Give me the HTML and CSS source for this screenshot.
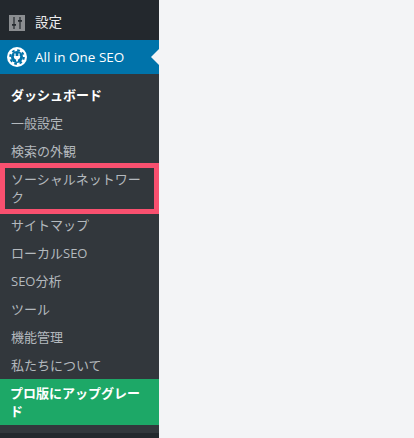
FILE: index.html
```html
<!DOCTYPE html>
<html lang="ja">
<head>
<meta charset="utf-8">
<title>All in One SEO</title>
<link rel="stylesheet" href="styles.css">
</head>
<body>
<nav class="sidebar">
  <a class="top-item">
    <svg class="settings-icon" viewBox="0 0 16 16" width="16" height="16"><rect width="16" height="16" fill="#8b8e91"/><path d="M5 2v12M11 2v12" stroke="#23282d" stroke-width="1.200" fill="none"/><path d="M3 9h4v1.700h-4zM9 5h4v1.700h-4z" fill="#23282d"/></svg>
    <span>設定</span>
  </a>
  <a class="top-item current">
    <svg class="aio-icon" viewBox="0 0 20 20" width="20" height="20"><circle cx="10" cy="10" r="10" fill="#fff"/><circle cx="10" cy="10" r="6" fill="#0073aa"/><circle cx="10" cy="10" r="6.800" fill="none" stroke="#0073aa" stroke-width="2" stroke-dasharray="2.670 2.670"/><path d="M8 6.500v2.500M12 6.500v2.500" stroke="#fff" stroke-width="1.300" fill="none"/><path d="M6.800 9h6.400c0 2.100-1 3.300-2.300 3.600v2h-1.800v-2c-1.300-.3-2.300-1.500-2.300-3.600z" fill="#fff"/></svg>
    <span>All in One SEO</span>
  </a>
  <ul class="submenu">
    <li class="sub-item active">ダッシュボード</li>
    <li class="sub-item">一般設定</li>
    <li class="sub-item">検索の外観</li>
    <li class="sub-item marked">ソーシャルネットワーク</li>
    <li class="sub-item">サイトマップ</li>
    <li class="sub-item">ローカルSEO</li>
    <li class="sub-item">SEO分析</li>
    <li class="sub-item">ツール</li>
    <li class="sub-item">機能管理</li>
    <li class="sub-item">私たちについて</li>
    <li class="sub-item upgrade">プロ版にアップグレード</li>
  </ul>
</nav>
</body>
</html>
```
FILE: styles.css
```css
html, body {
  margin: 0;
  height: 100%;
}
body {
  background: #f3f4f6;
  font-family: "Open Sans", "Noto Sans CJK JP", sans-serif;
  font-size: 13px;
  overflow: hidden;
}
.sidebar {
  width: 159px;
  height: 438px;
  background: #23282d;
}
.top-item {
  display: flex;
  align-items: center;
  gap: 10px;
  height: 34px;
  padding-left: 9px;
  color: #eeeeee;
  font-size: 13.500px;
  line-height: 18px;
}
.top-item:first-child {
  height: 40px;
  padding-top: 5px;
  box-sizing: border-box;
}
.top-item:first-child span {
  position: relative;
  top: -1px;
}
.current {
  position: relative;
  background: #0073aa;
  color: #fff;
  padding-left: 7px;
  gap: 8px;
}
.current::after {
  content: "";
  position: absolute;
  right: 0;
  top: 50%;
  margin-top: -8px;
  border: 8px solid transparent;
  border-right-color: #f3f4f6;
}
.submenu {
  list-style: none;
  margin: 0;
  padding: 7px 0 8px;
  background: #32373c;
}
.sub-item {
  padding: 4.500px 12px 5.500px 11px;
  line-height: 18px;
  color: #b4b9be;
}
.active {
  color: #fff;
  font-weight: 700;
}
.marked {
  position: relative;
}
.marked::after {
  content: "";
  position: absolute;
  left: 0;
  right: 0;
  top: -2px;
  bottom: -3px;
  border: 5px solid #f9506f;
}
.upgrade {
  background: #1da867;
  color: #fff;
  font-weight: 700;
  padding-left: 10px;
}
```
